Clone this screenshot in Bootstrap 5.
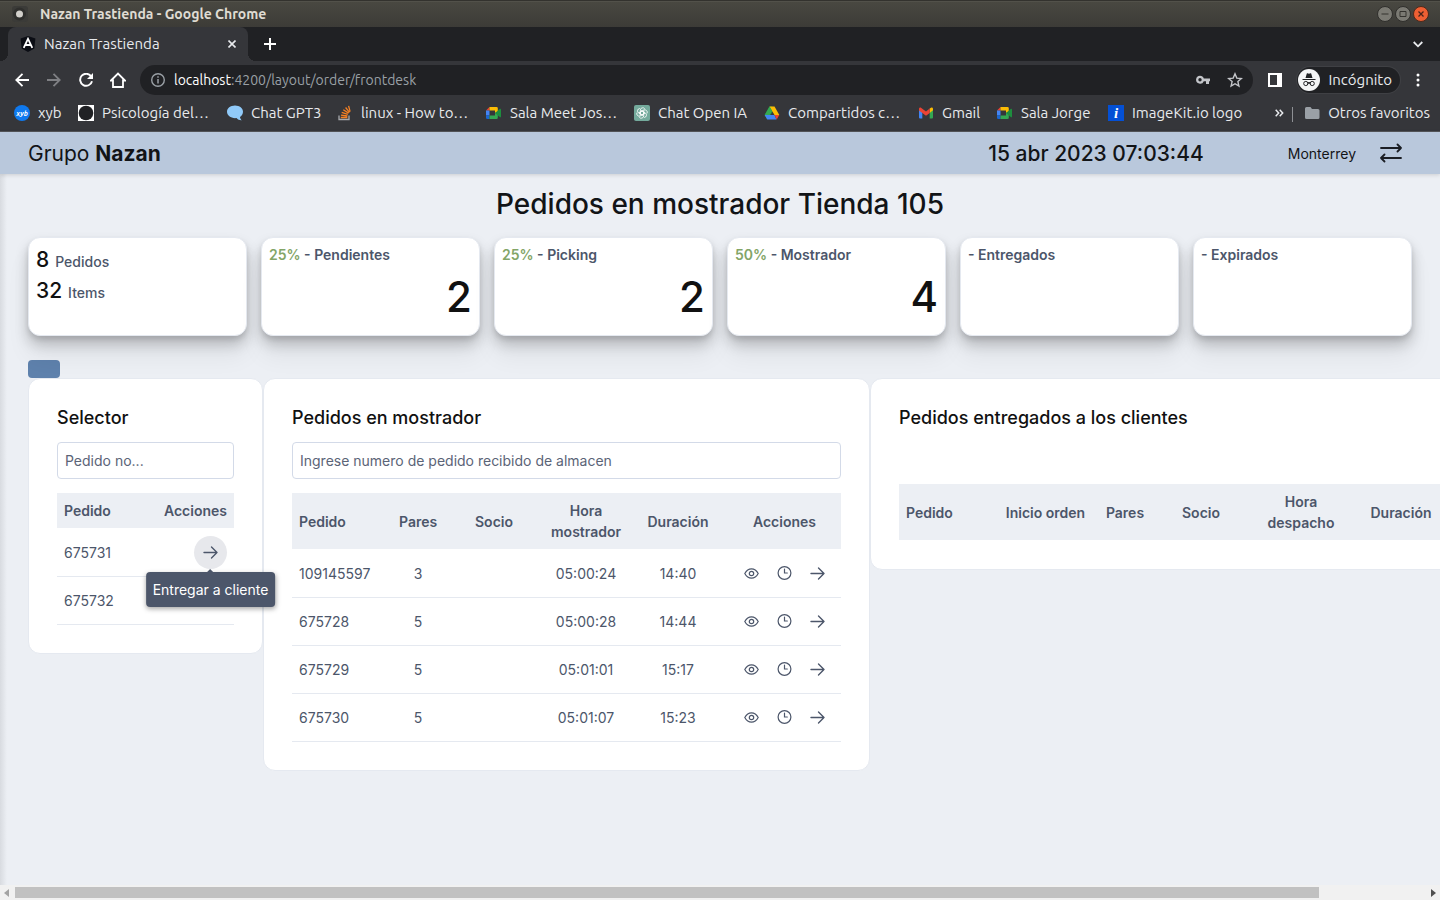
<!DOCTYPE html>
<html lang="es">
<head>
<meta charset="utf-8">
<meta name="viewport" content="width=device-width, initial-scale=1">
<title>Nazan Trastienda</title>
<link href="https://cdn.jsdelivr.net/npm/bootstrap@5.3.0/dist/css/bootstrap.min.css" rel="stylesheet">
<style>
:root{--ink:#4c566a;--line:#e5e9f0;--ground:#eceff4;--chrome:#35363a;--chrome-dark:#202124}
body{font-family:Inter,sans-serif;font-size:14px;line-height:21px;color:var(--ink);background:var(--ground)}
svg{display:block;flex:none}
a{color:inherit;text-decoration:none}
button{color:inherit}
.browser-ui{font-family:Ubuntu,"Noto Sans",sans-serif;font-size:15px;line-height:20px;color:#e8eaed}
.plain-btn{background:none;border:0;padding:0;display:flex;align-items:center;justify-content:center}
.title-bar{height:27px;background:linear-gradient(#33322e 0,#33322e 1px,#5b5a53 1px,#494841 2px,#3c3b37);padding:0 10px 0 12px;font-weight:600;font-size:14px;color:#dfdbd2}
.title-bar .plain-btn{width:18px}
.tab-strip{height:34px;background:var(--chrome-dark);padding:0 13px 0 8px}
.browser-tab{position:relative;width:240px;height:34px;background:var(--chrome);border-radius:8px 8px 0 0;padding:0 8px 0 12px}
.browser-tab::before,.browser-tab::after{content:"";position:absolute;bottom:0;width:8px;height:8px}
.browser-tab::before{left:-8px;background:radial-gradient(circle at 0 0,transparent 8px,var(--chrome) 8px)}
.browser-tab::after{right:-8px;background:radial-gradient(circle at 100% 0,transparent 8px,var(--chrome) 8px)}
.tool-bar{height:38px;background:var(--chrome);padding:0 12px}
.tool-bar .plain-btn{width:20px;height:20px}
.nav-buttons{gap:12px;margin-right:12px}
.address{height:30px;border-radius:15px;background:var(--chrome-dark);padding:0 8px 0 10px;font-size:14px}
.address-text{color:#9aa0a6}
.tool-bar .incognito{width:auto;height:26px;border-radius:13px;background:var(--chrome-dark);box-shadow:0 0 0 1px #3f4044;padding:0 8px 0 1px}
.bookmark-bar{height:33px;background:var(--chrome);border-bottom:1px solid #55565a;padding:0 10px 4px 14px}
.bookmark-list{display:grid;grid-template-columns:64px 149px 110px 149px 148px 130px 154px 79px 111px max-content}
.bookmark-bar a{display:flex;align-items:center;gap:8px;white-space:nowrap}
.app-header{height:42px;background:#b9c8dc;color:#121417;padding:0 38px 0 28px;box-shadow:0 1px 4px rgba(0,0,0,.14);z-index:1}
.brand,.clock{font-size:21px;line-height:29px}
.clock{margin-right:84px;font-weight:500}
.app-main{padding:9px 28px 0;background:linear-gradient(90deg,#d8dbe0,var(--ground) 7px)}
.page-title{font-size:28px;line-height:42px;font-weight:500;color:#121417}
.stats{display:grid;grid-template-columns:repeat(6,1fr);gap:14px}
.stat{height:99px;border:1px solid var(--line);border-radius:12px;background:#fff;padding:6px 7px;box-shadow:0 3px 5px rgba(0,0,0,.1),0 8px 14px rgba(0,0,0,.2),0 20px 25px rgba(0,0,0,.06)}
.stat-label{font-weight:600}
.stat-label em{font-style:normal;color:#83a567}
.stat-number{font-size:42px;line-height:63px;font-weight:500;color:#111}
.stat-row{height:31px;line-height:31px;font-weight:500}
.stat-row b{font-size:21px;font-weight:500;color:#111;margin-right:6px}
.stub-btn{width:32px;height:18px;background:#5e81ac;border:0;border-radius:4px;display:block}
.panels{display:grid;grid-template-columns:minmax(235px,17fr) minmax(607px,44fr) max-content;align-items:start}
.panel{background:#fff;border:1px solid var(--line);border-radius:12px;padding:28px}
.panel h2{font-size:18px;line-height:21px;font-weight:500;color:#111;margin:0 0 14px}
.panel h2.spaced{margin-bottom:56px}
.panel .form-control{height:37px;border:1px solid #d3dae8;border-radius:4px;padding:0 7px;font-size:14px;color:var(--ink);margin-bottom:14px}
.panel .form-control::placeholder{color:#5b6477;opacity:1}
.orders{width:100%;table-layout:fixed;border-collapse:separate;border-spacing:0;color:var(--ink)}
.orders th{background:var(--ground);background-clip:padding-box;border-bottom:1px solid transparent;font-weight:600;padding:7px;text-align:center}
.orders td{padding:7px;border-bottom:1px solid var(--line);text-align:center;height:48px}
.orders th:first-child,.orders td:first-child{text-align:left}
.wide-table{width:629px}
.round-btn{width:33px;height:33px;border-radius:50%;border:0;background:none;padding:0;display:flex;align-items:center;justify-content:center}
.round-btn.hovered{background:#e7e8ec}
.tip-anchor{position:relative;width:33px}
.tip{position:absolute;top:36px;left:50%;transform:translateX(-50%);background:var(--ink);color:#fff;padding:7px;border-radius:4px;white-space:nowrap;box-shadow:0 2px 5px rgba(0,0,0,.35);z-index:2}
.tip::before{content:"";position:absolute;top:-3px;left:50%;margin-left:-3px;border:3px solid transparent;border-top:0;border-bottom-color:var(--ink)}
.scroll-bar{height:15px;background:#f1f1f1;padding:0 4px;gap:6px}
.scroll-track{height:11px}
.scroll-thumb{height:11px;background:#c1c1c1}
</style>
</head>
<body class="vh-100 d-flex flex-column overflow-hidden">
<svg width="0" height="0" class="position-absolute" aria-hidden="true">
  <defs>
    <g id="i-arrow" fill="none" stroke="#4c566a" stroke-width="1.4" stroke-linecap="round" stroke-linejoin="round"><path d="M1 6.500h13M8.500 1 14 6.500 8.500 12"/></g>
    <g id="i-clock" fill="none" stroke="#4c566a" stroke-width="1.2" stroke-linecap="round"><circle cx="7.500" cy="7" r="6.400"/><path d="M7.500 3.200V7h2.800"/></g>
    <g id="i-eye" fill="none" stroke="#4c566a" stroke-width="1.200"><path d="M.8 5.500C2.500 2.300 4.800.8 7.500.8s5 1.500 6.700 4.700c-1.700 3.200-4 4.700-6.700 4.700S2.500 8.700.8 5.500z"/><circle cx="7.500" cy="5.500" r="2.200"/></g>
    <g id="i-meet"><path fill="#ea4335" d="M0 5.500 3.500 2v3.500z"/><path fill="#4285f4" d="M0 5.500h3.500v5H0z"/><path fill="#1967d2" d="M0 10.500h3.500V14H1.300A1.300 1.300 0 0 1 0 12.700z"/><path fill="#fbbc04" d="M3.500 2h7A1.300 1.300 0 0 1 11.800 3.300V7L9 8V5.500H3.500z"/><path fill="#34a853" d="M3.500 10.500H9V8l2.800-1v5.700a1.300 1.300 0 0 1-1.300 1.300h-7z"/><path fill="#1e8e3e" d="m9 8 5-4.200c.5-.3 1-.1 1 .5v7.400c0 .6-.5.800-1 .5z"/></g>
  </defs>
</svg>

<header class="browser-ui">
  <div class="title-bar d-flex align-items-center">
    <svg width="16" height="16" viewBox="0 0 16 16" class="me-2"><rect width="16" height="16" rx="3" fill="#3b3b38"/><circle cx="7.500" cy="8" r="6.500" fill="#2f2f2d"/><circle cx="7.500" cy="8" r="3.500" fill="#d2d0cb"/></svg>
    <span class="ms-1 me-auto">Nazan Trastienda - Google Chrome</span>
    <button class="plain-btn" aria-label="Minimizar"><svg width="16" height="16" viewBox="0 0 16 16"><circle cx="8" cy="8" r="7.500" fill="#7b7a73" stroke="#302f2c"/><path d="M4.500 8h7" stroke="#34332f"/></svg></button>
    <button class="plain-btn" aria-label="Maximizar"><svg width="16" height="16" viewBox="0 0 16 16"><circle cx="8" cy="8" r="7.500" fill="#7b7a73" stroke="#302f2c"/><path d="M5 5.500h6v5H5z" fill="none" stroke="#34332f"/></svg></button>
    <button class="plain-btn" aria-label="Cerrar"><svg width="16" height="16" viewBox="0 0 16 16"><circle cx="8" cy="8" r="7.500" fill="#ee5f33" stroke="#4c2a1c"/><path d="m5.500 5.500 5 5m0-5-5 5" stroke="#4a241a" stroke-width="1.300"/></svg></button>
  </div>

  <div class="tab-strip d-flex align-items-center">
    <div class="browser-tab d-flex align-items-center">
      <svg width="16" height="16" viewBox="0 0 16 16" class="me-2"><path d="M8 0l7.400 2.600-1.100 9.800L8 16l-6.300-3.600L.6 2.600z" fill="#0b0d14"/><path d="m3.700 11.800 4.300-9 4.300 9M5.600 9h4.800" fill="none" stroke="#fff" stroke-width="1.800"/></svg>
      <span class="me-auto">Nazan Trastienda</span>
      <button class="plain-btn p-1" aria-label="Cerrar pestaña"><svg width="8" height="8" viewBox="0 0 8 8"><path d="m.5.500 7 7m0-7-7 7" stroke="#e8eaed" stroke-width="1.600"/></svg></button>
    </div>
    <button class="plain-btn ms-3" aria-label="Nueva pestaña"><svg width="12" height="12" viewBox="0 0 12 12"><path d="M6 0v12M0 6h12" stroke="#fff" stroke-width="2"/></svg></button>
    <button class="plain-btn ms-auto me-1" aria-label="Buscar pestañas"><svg width="10" height="7" viewBox="0 0 10 7"><path d="m.7 1 4.300 4.300L9.300 1" fill="none" stroke="#e8eaed" stroke-width="1.800"/></svg></button>
  </div>

  <div class="tool-bar d-flex align-items-center">
    <div class="nav-buttons d-flex">
      <button class="plain-btn" aria-label="Atrás"><svg width="14" height="14" viewBox="0 0 14 14"><path d="M14 7H1.500M7.500.8 1.300 7l6.200 6.200" fill="none" stroke="#fff" stroke-width="1.800"/></svg></button>
      <button class="plain-btn" aria-label="Adelante"><svg width="14" height="14" viewBox="0 0 14 14"><path d="M0 7h12.500M6.500.8 12.700 7l-6.200 6.200" fill="none" stroke="#7f8084" stroke-width="1.800"/></svg></button>
      <button class="plain-btn" aria-label="Recargar"><svg width="14" height="14" viewBox="0 0 14 14"><path d="M12.200 3.500A6 6 0 1 0 13 8.200" fill="none" stroke="#fff" stroke-width="1.900"/><path d="M14 0v6H8z" fill="#fff"/></svg></button>
      <button class="plain-btn" aria-label="Inicio"><svg width="16" height="16" viewBox="0 0 16 16"><path d="M1 8.500 8 1.500l7 7h-2V15H3V8.500z" fill="none" stroke="#fff" stroke-width="1.800"/></svg></button>
    </div>
    <div class="address d-flex align-items-center flex-grow-1 me-1">
      <svg width="16" height="16" viewBox="0 0 16 16" class="me-2"><circle cx="8" cy="8" r="6.300" fill="none" stroke="#9aa0a6" stroke-width="1.400"/><path d="M8 7v4.500M8 4.300v1.500" stroke="#9aa0a6" stroke-width="1.500"/></svg>
      <a href="#" class="address-text flex-grow-1"><span class="text-white">localhost</span>:4200/layout/order/frontdesk</a>
      <button class="plain-btn me-2" aria-label="Contraseñas"><svg width="14" height="10" viewBox="0 0 14 10"><path fill="#c4c6ca" fill-rule="evenodd" d="M4 .7a4 4 0 0 1 3.800 2.800H14v2.700h-1V9h-3V6.200H7.800A4 4 0 1 1 4 .7zM4 3a1.700 1.700 0 1 0 0 3.400A1.700 1.700 0 0 0 4 3z"/></svg></button>
      <button class="plain-btn ms-1" aria-label="Guardar en favoritos"><svg width="16" height="16" viewBox="0 0 16 16"><path d="m8 1.800 1.800 4.300 4.600.4-3.500 3.100 1 4.500L8 11.700l-3.900 2.400 1-4.500-3.500-3.100 4.600-.4z" fill="none" stroke="#c4c6ca" stroke-width="1.400"/></svg></button>
    </div>
    <button class="plain-btn ms-2 me-2" aria-label="Panel lateral"><svg width="14" height="14" viewBox="0 0 14 14"><path fill="#fff" fill-rule="evenodd" d="M0 0h14v14H0zM2 2v10h7V2z"/></svg></button>
    <button class="plain-btn incognito ms-1 me-2"><svg width="22" height="22" viewBox="0 0 22 22" class="me-2"><circle cx="11" cy="11" r="11" fill="#f4f5f6"/><path d="M7.500 9 8.800 4.500c.8-.5 1.500.2 2.200.2s1.400-.7 2.200-.2L14.500 9z" fill="#202124"/><path d="M4.500 10.500h13M9.500 14.500c.8-.8 2.200-.8 3 0" fill="none" stroke="#202124" stroke-width="1.200"/><circle cx="7.800" cy="14.500" r="2.100" fill="none" stroke="#202124"/><circle cx="14.200" cy="14.500" r="2.100" fill="none" stroke="#202124"/></svg>Incógnito</button>
    <button class="plain-btn" aria-label="Menú"><svg width="4" height="14" viewBox="0 0 4 14" fill="#fff"><circle cx="2" cy="2" r="1.500"/><circle cx="2" cy="7" r="1.500"/><circle cx="2" cy="12" r="1.500"/></svg></button>
  </div>

  <nav class="bookmark-bar d-flex align-items-center" aria-label="Favoritos">
    <div class="bookmark-list me-auto">
      <a href="#"><svg width="16" height="16" viewBox="0 0 16 16"><circle cx="8" cy="8" r="8" fill="#0f79ee"/><text x="8" y="10.500" font-size="7" font-weight="700" font-style="italic" text-anchor="middle" fill="#fff">xyb</text></svg>xyb</a>
      <a href="#"><svg width="16" height="16" viewBox="0 0 16 16"><path fill="#fff" d="M0 0h16v16H0z"/><circle cx="8" cy="8" r="7.300" fill="#202124"/></svg>Psicología del…</a>
      <a href="#"><svg width="16" height="16" viewBox="0 0 16 16"><path fill="#90caf9" d="M8 .5c4.600 0 8 2.800 8 6.300 0 2.200-1.200 4-3 5.200.1 1.400.8 2.500 1.800 3.300-2 .2-3.900-.6-5.300-2.200-5.300.6-9.500-2.500-9.500-6.300C0 3.300 3.400.5 8 .5z"/></svg>Chat GPT3</a>
      <a href="#"><svg width="16" height="16" viewBox="0 0 16 16" fill="none" stroke-width="1.300"><path d="M2 10.500v4h10v-4" stroke="#a7a9ac"/><path d="M3.800 12.500h6.500M4 10.200l6.400.8M4.700 7.400l6.100 1.900M6.300 4.700l5.300 3.400M8.600 2.500l3.900 4.800M11.600.8l1.500 5.800" stroke="#f48024"/></svg>linux - How to…</a>
      <a href="#"><svg width="16" height="16" viewBox="0 0 16 16"><use href="#i-meet"/></svg>Sala Meet Jos…</a>
      <a href="#"><svg width="16" height="16" viewBox="0 0 16 16"><rect width="16" height="16" rx="2" fill="#74aa9c"/><g fill="none" stroke="#fff" stroke-width=".8"><g id="petal"><path d="M6.300 5V9l3 1.800M6.300 5a2.500 2.500 0 0 1 4.500-1.200"/></g><use href="#petal" transform="rotate(60 8 8)"/><use href="#petal" transform="rotate(120 8 8)"/><use href="#petal" transform="rotate(180 8 8)"/><use href="#petal" transform="rotate(240 8 8)"/><use href="#petal" transform="rotate(300 8 8)"/></g></svg>Chat Open IA</a>
      <a href="#"><svg width="16" height="16" viewBox="0 0 16 16"><path fill="#1e8e3e" d="M5.500 1.500h2.700L10 4.700 3.300 14.500.7 10z"/><path fill="#fbbc04" d="M5.500 1.500h5L15.300 10h-4.800z"/><path fill="#34a853" d="M5.500 1.500 8 6 3.300 14.300.7 10z"/><path fill="#4285f4" d="M.7 10h9.800l2 4.500H3.300z"/><path fill="#ea4335" d="M10.500 10h4.800l-2.600 4.500z"/></svg>Compartidos c…</a>
      <a href="#"><svg width="16" height="16" viewBox="0 0 16 16"><path fill="#4285f4" d="M1 4.500 4.300 7v6.500H2a1 1 0 0 1-1-1z"/><path fill="#34a853" d="M15 4.500 11.700 7v6.500H14a1 1 0 0 0 1-1z"/><path fill="#fbbc04" d="M11.700 3.500 13 2.700c1-.6 2 .1 2 1.200v1.400L11.700 8z"/><path fill="#ea4335" d="M1 3.900c0-1.100 1-1.800 2-1.200l5 3.800 3.700-3V8L8 10.800 1 5.500z"/></svg>Gmail</a>
      <a href="#"><svg width="16" height="16" viewBox="0 0 16 16"><use href="#i-meet"/></svg>Sala Jorge</a>
      <a href="#"><svg width="16" height="16" viewBox="0 0 16 16"><path fill="#0450d5" d="M0 0h16v16H0z"/><text x="8" y="13" font-family="Liberation Serif,serif" font-size="15" font-weight="700" font-style="italic" text-anchor="middle" fill="#fff">i</text></svg>ImageKit.io logo</a>
    </div>
    <button class="plain-btn me-1" aria-label="Más favoritos"><svg width="9" height="8" viewBox="0 0 9 8"><path d="m.7.700 3 3.300-3 3.300m4-6.600 3 3.300-3 3.300" fill="none" stroke="#e8eaed" stroke-width="1.500"/></svg></button>
    <div class="vr mx-1 my-2 opacity-50"></div>
    <a href="#" class="ms-2"><svg width="15" height="16" viewBox="0 0 15 16"><path fill="#9aa0a6" d="M1.500 2h4L7 4h6a1.500 1.500 0 0 1 1.500 1.500v7A1.500 1.500 0 0 1 13 14H1.500A1.500 1.500 0 0 1 0 12.500v-9A1.500 1.500 0 0 1 1.500 2z"/></svg>Otros favoritos</a>
  </nav>
</header>

<header class="app-header d-flex align-items-center position-relative">
  <a href="#" class="brand me-auto">Grupo <strong>Nazan</strong></a>
  <time class="clock">15 abr 2023 07:03:44</time>
  <span class="me-4">Monterrey</span>
  <button class="plain-btn" aria-label="Cambiar tienda"><svg width="22" height="20" viewBox="0 0 22 20"><path d="M1 5h20M17.500 1.500 21 5l-3.500 3.500M21 15H1M4.500 11.500 1 15l3.500 3.500" fill="none" stroke="#1b1e24" stroke-width="1.800" stroke-linecap="round" stroke-linejoin="round"/></svg></button>
</header>

<main class="app-main flex-grow-1 overflow-hidden">
  <h1 class="page-title text-center mb-2">Pedidos en mostrador Tienda 105</h1>
  <section class="stats pt-1 mb-4">
    <div class="stat"><div class="stat-row d-flex align-items-baseline"><b>8</b>Pedidos</div><div class="stat-row d-flex align-items-baseline"><b>32</b>Items</div></div>
    <div class="stat"><div class="stat-label"><em>25%</em> - Pendientes</div><div class="stat-number text-end">2</div></div>
    <div class="stat"><div class="stat-label"><em>25%</em> - Picking</div><div class="stat-number text-end">2</div></div>
    <div class="stat"><div class="stat-label"><em>50%</em> - Mostrador</div><div class="stat-number text-end">4</div></div>
    <div class="stat"><div class="stat-label">- Entregados</div></div>
    <div class="stat"><div class="stat-label">- Expirados</div></div>
  </section>
  <button class="stub-btn" aria-label="Actualizar"></button>
  <div class="panels">
    <section class="panel">
      <h2>Selector</h2>
      <input class="form-control" type="text" placeholder="Pedido no..." aria-label="Pedido no...">
      <table class="orders">
        <thead><tr><th>Pedido</th><th class="text-end">Acciones</th></tr></thead>
        <tbody>
          <tr><td>675731</td><td><div class="tip-anchor ms-auto"><button class="round-btn hovered" aria-label="Entregar"><svg width="15" height="14" viewBox="0 0 15 14"><use href="#i-arrow"/></svg></button><div class="tip" role="tooltip">Entregar a cliente</div></div></td></tr>
          <tr><td>675732</td><td></td></tr>
        </tbody>
      </table>
    </section>

    <section class="panel">
      <h2>Pedidos en mostrador</h2>
      <input class="form-control" type="text" placeholder="Ingrese numero de pedido recibido de almacen" aria-label="Ingrese numero de pedido recibido de almacen">
      <table class="orders">
        <colgroup><col><col style="width:52px"><col style="width:100px"><col style="width:84px"><col style="width:100px"><col style="width:113px"></colgroup>
        <thead><tr><th>Pedido</th><th>Pares</th><th>Socio</th><th>Hora mostrador</th><th>Duración</th><th>Acciones</th></tr></thead>
        <tbody id="counter-orders"></tbody>
      </table>
    </section>

    <section class="panel">
      <h2 class="spaced">Pedidos entregados a los clientes</h2>
      <table class="orders wide-table">
        <colgroup><col style="width:100px"><col style="width:93px"><col style="width:66px"><col style="width:86px"><col style="width:114px"><col style="width:86px"><col></colgroup>
        <thead><tr><th>Pedido</th><th class="px-0">Inicio orden</th><th>Pares</th><th>Socio</th><th>Hora<br>despacho</th><th>Duración</th><th aria-label="Acciones"></th></tr></thead>
      </table>
    </section>
  </div>
</main>

<div class="scroll-bar d-flex align-items-center" aria-hidden="true">
  <svg width="5" height="8" viewBox="0 0 5 8"><path d="M5 0v8L0 4z" fill="#a3a3a3"/></svg>
  <div class="scroll-track flex-grow-1"><div class="scroll-thumb" style="width:92.500%"></div></div>
  <svg width="5" height="8" viewBox="0 0 5 8"><path d="M0 0v8l5-4z" fill="#505050"/></svg>
</div>

<script src="https://cdn.jsdelivr.net/npm/bootstrap@5.3.0/dist/js/bootstrap.bundle.min.js"></script>
<script>
const orders = [
  ['109145597', 3, '05:00:24', '14:40'],
  ['675728', 5, '05:00:28', '14:44'],
  ['675729', 5, '05:01:01', '15:17'],
  ['675730', 5, '05:01:07', '15:23']
];
document.getElementById('counter-orders').innerHTML = orders.map(([id, pairs, time, span]) => `
  <tr><td>${id}</td><td>${pairs}</td><td></td><td>${time}</td><td>${span}</td>
  <td><div class="d-flex">
    <button class="round-btn" aria-label="Ver"><svg width="15" height="12" viewBox="0 0 15 12"><use href="#i-eye"/></svg></button>
    <button class="round-btn" aria-label="Historial"><svg width="15" height="15" viewBox="0 0 15 15"><use href="#i-clock"/></svg></button>
    <button class="round-btn" aria-label="Entregar"><svg width="15" height="14" viewBox="0 0 15 14"><use href="#i-arrow"/></svg></button>
  </div></td></tr>`).join('');
</script>
</body>
</html>
